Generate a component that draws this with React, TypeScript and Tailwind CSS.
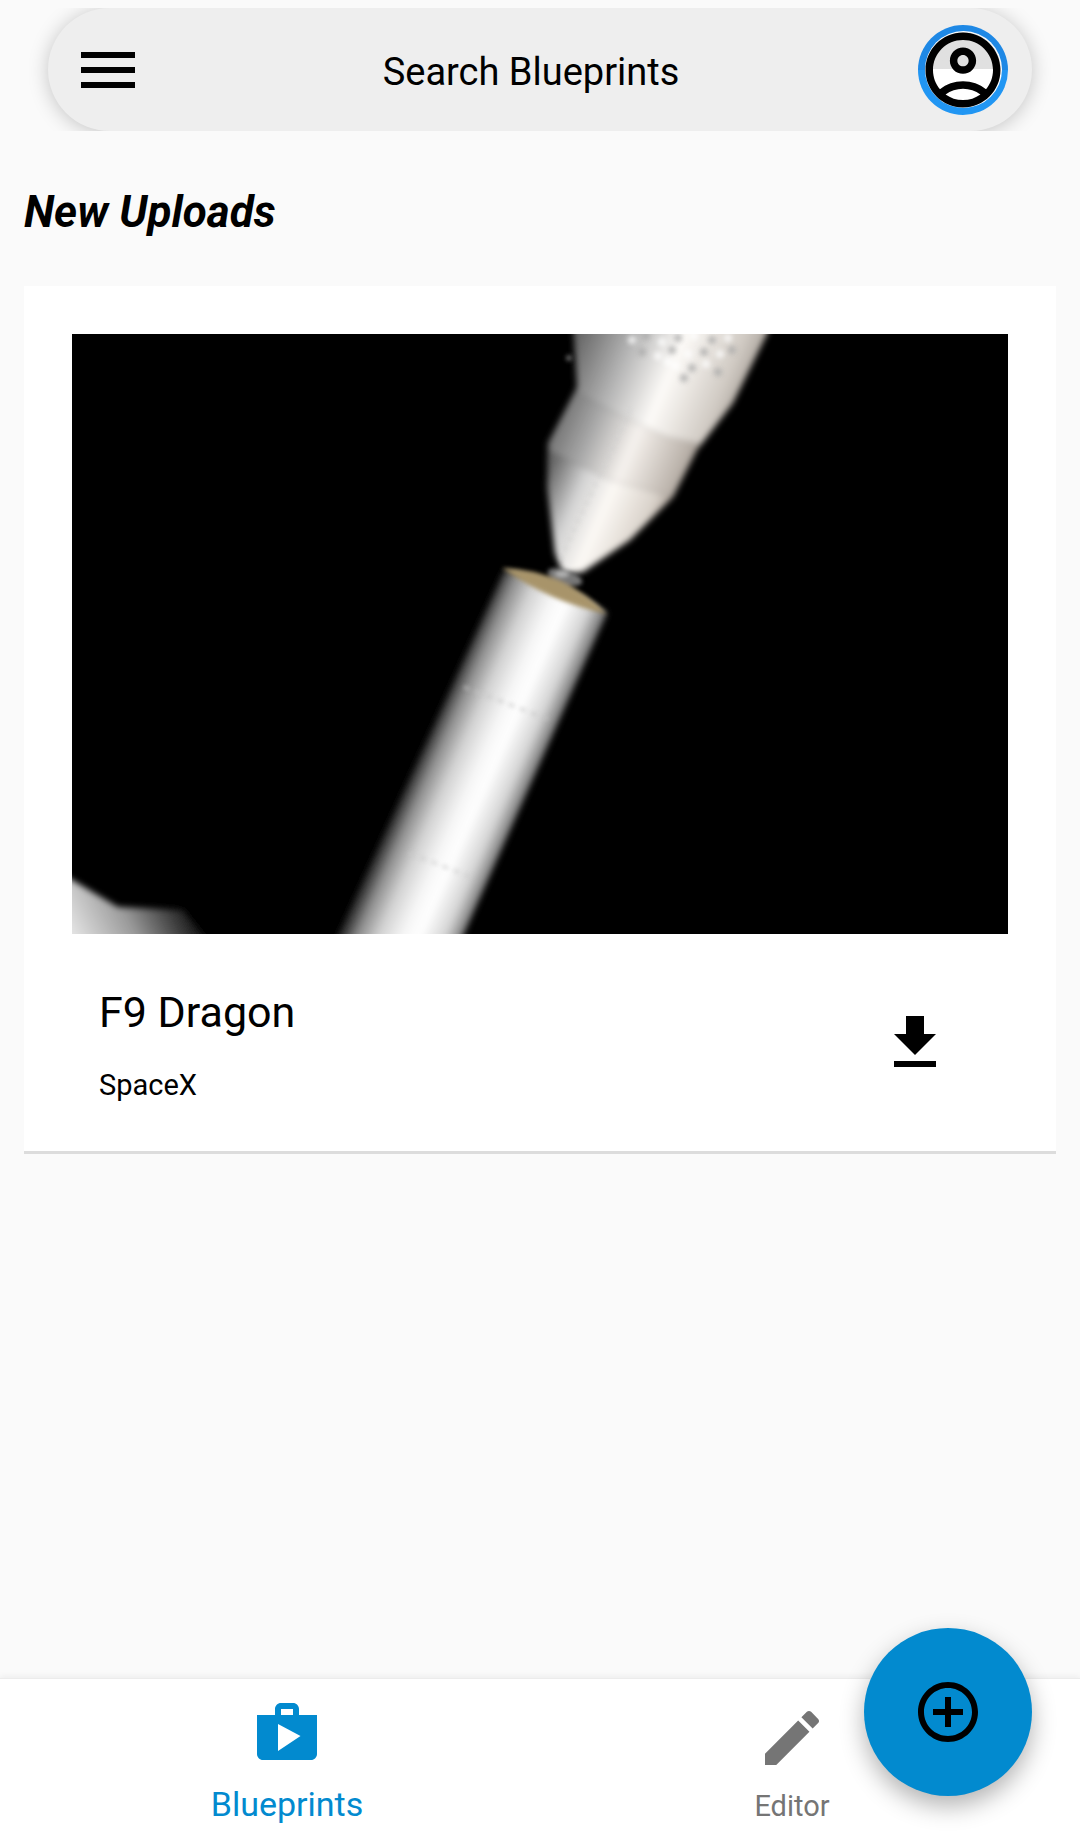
const menuPath = "M3 18h18v-2H3v2zm0-5h18v-2H3v2zm0-7v2h18V6H3z";
const accountPath =
  "M12 2C6.48 2 2 6.48 2 12s4.48 10 10 10 10-4.48 10-10S17.52 2 12 2zM7.35 18.5C8.66 17.56 10.26 17 12 17s3.34.56 4.65 1.5c-1.31.94-2.91 1.5-4.65 1.5s-3.34-.56-4.65-1.5zm10.79-1.38C16.45 15.8 14.32 15 12 15s-4.45.8-6.14 2.12C4.7 15.73 4 13.95 4 12c0-4.42 3.58-8 8-8s8 3.58 8 8c0 1.95-.7 3.73-1.86 5.12zM12 6c-1.93 0-3.5 1.57-3.5 3.5S10.07 13 12 13s3.5-1.57 3.5-3.5S13.93 6 12 6zm0 5c-.83 0-1.5-.67-1.5-1.5S11.17 8 12 8s1.5.67 1.5 1.5S12.83 11 12 11z";
const downloadPath = "M19 9h-4V3H9v6H5l7 7 7-7zM5 18v2h14v-2H5z";
const shopPath =
  "M16 6V4c0-1.11-.89-2-2-2h-4c-1.11 0-2 .89-2 2v2H2v13c0 1.11.89 2 2 2h16c1.11 0 2-.89 2-2V6h-6zm-6-2h4v2h-4V4zM9 18V9l7.5 4L9 18z";
const editPath =
  "M3 17.25V21h3.75L17.81 9.94l-3.75-3.75L3 17.25zM20.71 7.04c.39-.39.39-1.02 0-1.41l-2.34-2.34c-.39-.39-1.02-.39-1.41 0l-1.83 1.83 3.75 3.75 1.83-1.83z";
const addPath =
  "M13 7h-2v4H7v2h4v4h2v-4h4v-2h-4V7zm-1-5C6.48 2 2 6.48 2 12s4.48 10 10 10 10-4.48 10-10S17.52 2 12 2zm0 18c-4.41 0-8-3.59-8-8s3.59-8 8-8 8 3.59 8 8-3.59 8-8 8z";

function Icon({ d, className }: { d: string; className: string }) {
  return (
    <svg viewBox="0 0 24 24" fill="currentColor" className={className}>
      <path d={d} />
    </svg>
  );
}

// tile texture on the capsule nose
const tiles = [
  [560, 6], [574, 2], [590, 8], [606, 4], [622, 2], [640, 6], [656, 4],
  [570, 18], [586, 22], [600, 16], [616, 20], [632, 18], [648, 20], [660, 16],
  [604, 32], [620, 34], [634, 30], [646, 38], [596, 28], [612, 44],
];

function RocketPicture() {
  return (
    <svg viewBox="0 0 936 600" className="block w-full h-full">
      <defs>
        <linearGradient id="body" gradientUnits="userSpaceOnUse" x1="432" y1="236" x2="532" y2="280">
          <stop offset="0" stopColor="#333333" />
          <stop offset="0.12" stopColor="#8c8c8c" />
          <stop offset="0.3" stopColor="#d2d2d2" />
          <stop offset="0.5" stopColor="#f6f6f6" />
          <stop offset="0.64" stopColor="#ffffff" />
          <stop offset="0.85" stopColor="#d5d5d5" />
          <stop offset="1" stopColor="#777777" />
        </linearGradient>
        <linearGradient id="noseTop" gradientUnits="userSpaceOnUse" x1="500" y1="15" x2="690" y2="95">
          <stop offset="0" stopColor="#666666" />
          <stop offset="0.25" stopColor="#b4b4b4" />
          <stop offset="0.48" stopColor="#fdfbf8" />
          <stop offset="0.75" stopColor="#d0cac3" />
          <stop offset="1" stopColor="#7c746c" />
        </linearGradient>
        <linearGradient id="noseMid" gradientUnits="userSpaceOnUse" x1="470" y1="85" x2="635" y2="155">
          <stop offset="0" stopColor="#5c5c5c" />
          <stop offset="0.28" stopColor="#a8a8a8" />
          <stop offset="0.52" stopColor="#f6f2ee" />
          <stop offset="0.8" stopColor="#bdb5ad" />
          <stop offset="1" stopColor="#7c746c" />
        </linearGradient>
        <linearGradient id="noseTip" gradientUnits="userSpaceOnUse" x1="478" y1="135" x2="605" y2="190">
          <stop offset="0" stopColor="#666666" />
          <stop offset="0.25" stopColor="#d2d2d2" />
          <stop offset="0.47" stopColor="#fcf9f5" />
          <stop offset="0.78" stopColor="#d9d2ca" />
          <stop offset="1" stopColor="#85796e" />
        </linearGradient>
        <linearGradient id="leg" gradientUnits="userSpaceOnUse" x1="0" y1="600" x2="100" y2="550">
          <stop offset="0" stopColor="#e4e4e4" />
          <stop offset="0.5" stopColor="#9a9a9a" />
          <stop offset="1" stopColor="#1e1e1e" />
        </linearGradient>
        <filter id="soft" x="-10%" y="-10%" width="120%" height="120%">
          <feGaussianBlur stdDeviation="3" />
        </filter>
        <filter id="softer" x="-20%" y="-20%" width="140%" height="140%">
          <feGaussianBlur stdDeviation="2" />
        </filter>
        <filter id="tile" x="-20%" y="-20%" width="140%" height="140%">
          <feGaussianBlur stdDeviation="2.6" />
        </filter>
        <clipPath id="frame">
          <rect width="936" height="600" />
        </clipPath>
        <clipPath id="noseOutline">
          <path d="M501 -10 L505 53 L476 109 L475 153 L483 219 L491 240 L511 238 L558 206 L601 163 L625 116 L661 69 L700 -10 Z" />
        </clipPath>
      </defs>
      <rect width="936" height="600" fill="#000" />
      <g clipPath="url(#frame)">
        <g filter="url(#soft)">
          <path d="M-10 540 L46 573 L111 576 L140 612 L-10 612 Z" fill="url(#leg)" />
          <path d="M432 236 Q490 248 535 279 L383 620 L258 620 Z" fill="url(#body)" />
          <g clipPath="url(#noseOutline)">
            <path d="M480 -10 L720 -10 L720 130 L595 103 L551 83 L505 59 L480 50 Z" fill="url(#noseTop)" />
            <path d="M460 48 L505 59 L551 83 L595 103 L720 130 L640 175 L575 156 L538 146 L475 116 L460 110 Z" fill="url(#noseMid)" />
            <path d="M460 108 L475 116 L538 146 L575 156 L640 175 L560 260 L460 260 Z" fill="url(#noseTip)" />
          </g>
        </g>
        <g filter="url(#tile)" opacity="0.75">
          {tiles.map(([x, y], i) => (
            <circle key={i} cx={x} cy={y} r={4} fill={i % 2 === 0 ? "#ffffff" : "#a8a8a8"} />
          ))}
        </g>
        <g filter="url(#softer)">
          <circle cx={497} cy={24} r={3} fill="#666" />
          <ellipse cx={493} cy={243} rx={18} ry={7} fill="#777777" transform="rotate(18 493 243)" />
          <ellipse cx={490} cy={240} rx={7} ry={3} fill="#b5b5b5" />
          <path d="M430 234 Q492 236 535 280 Q478 268 430 234 Z" fill="#a8946a" />
          <path d="M558 76 L488 226" stroke="#cfcfcf" strokeWidth="2" strokeDasharray="5 5" fill="none" />
          <path d="M392 353 L478 386" stroke="#c4c4c4" strokeWidth="2" strokeDasharray="6 6" fill="none" />
          <path d="M337 519 L404 545" stroke="#cacaca" strokeWidth="2" strokeDasharray="6 6" fill="none" />
        </g>
      </g>
    </svg>
  );
}

function Header() {
  return (
    <div className="mt-2 mx-6 px-6 h-[123px] overflow-hidden">
      <div className="h-full flex items-center rounded-[62px] bg-[#eeeeee] px-6 shadow-[0_2px_20px_rgba(0,0,0,0.22)]">
        <Icon d={menuPath} className="w-[72px] h-[72px] text-black shrink-0" />
        <div className="flex-1 text-center text-[38px] leading-[44px] text-black pt-1">Search Blueprints</div>
        <div className="relative w-[90px] h-[90px] shrink-0 rounded-full bg-gradient-to-b from-[#1e88e5] from-50% to-[#2196f3] to-50% p-[6.5px]">
          <div className="h-full w-full rounded-full bg-white p-px">
            <div className="h-full w-full rounded-full bg-gradient-to-b from-[#e0e0e0] from-50% to-white to-50%" />
          </div>
          <Icon d={accountPath} className="absolute inset-0 w-[90px] h-[90px] text-black" />
        </div>
      </div>
    </div>
  );
}

function BlueprintCard() {
  return (
    <div className="mx-6 mt-[50px] bg-white border-b-[3px] border-[#dcdcdc]">
      <div className="px-12 pt-12">
        <div className="h-[600px]">
          <RocketPicture />
        </div>
      </div>
      <div className="flex items-center justify-between h-[217px] pl-[75px] pr-[105px]">
        <div className="mt-[5px]">
          <div className="text-[43px] leading-[48px] text-black">F9 Dragon</div>
          <div className="mt-[32px] text-[29px] leading-[34px] text-black">SpaceX</div>
        </div>
        <Icon d={downloadPath} className="w-[72px] h-[72px] text-black" />
      </div>
    </div>
  );
}

function BottomNav() {
  return (
    <div className="h-[167px] bg-white flex border-t border-[#ececec] shadow-[0_-2px_6px_rgba(0,0,0,0.05)]">
      <div className="w-[574px] flex flex-col items-center pt-[18px]">
        <Icon d={shopPath} className="w-[72px] h-[72px] text-[#028acf]" />
        <div className="mt-[15px] text-[34px] leading-[40px] text-[#028acf]">Blueprints</div>
      </div>
      <div className="w-[436px] flex flex-col items-center pt-[23px]">
        <Icon d={editPath} className="w-[72px] h-[72px] text-[#757575]" />
        <div className="mt-[15px] text-[29px] leading-[34px] text-[#757575]">Editor</div>
      </div>
    </div>
  );
}

export default function App() {
  return (
    <div className="relative w-[1080px] h-[1845px] overflow-hidden bg-[#fafafa] flex flex-col font-[Roboto,sans-serif]">
      <Header />
      <h2 className="pl-6 mt-[57px] text-[44px] leading-[48px] font-bold italic text-black">New Uploads</h2>
      <BlueprintCard />
      <div className="flex-1" />
      <BottomNav />
      <div className="absolute left-[864px] top-[1628px] w-[168px] h-[168px] rounded-full bg-[#028acf] flex items-center justify-center shadow-[0_10px_24px_rgba(0,0,0,0.3)]">
        <Icon d={addPath} className="w-[72px] h-[72px] text-black" />
      </div>
    </div>
  );
}
